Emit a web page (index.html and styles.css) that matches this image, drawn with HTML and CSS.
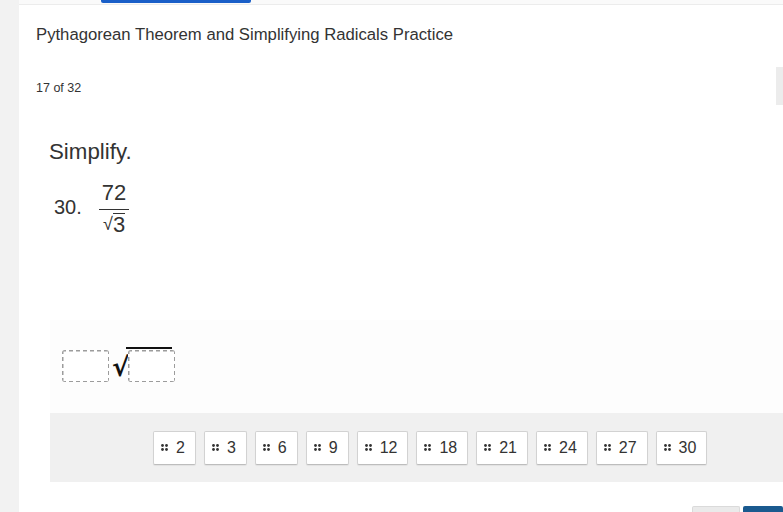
FILE: index.html
```html
<!DOCTYPE html>
<html>
<head>
<meta charset="utf-8">
<link rel="stylesheet" href="styles.css">
</head>
<body>
<div class="app">
  <div class="sidebar"></div>
  <div class="main">
    <div class="topbar"><div class="tab-indicator"></div></div>
    <div class="header">
      <h1 class="title">Pythagorean Theorem and Simplifying Radicals Practice</h1>
      <div class="counter">17 of 32</div>
    </div>
    <div class="question">
      <div class="prompt">Simplify.</div>
      <div class="problem">
        <span class="num">30.</span>
        <span class="frac">
          <span class="numer">72</span>
          <span class="denom"><span class="rad">√</span><span class="radicand">3</span></span>
        </span>
      </div>
    </div>
    <div class="answer">
      <div class="drop-row">
        <div class="drop"></div>
        <span class="root-sign">√</span>
        <div class="drop under"></div>
      </div>
    </div>
    <div class="tray">
      <div class="chip"><svg class="grip" viewBox="0 0 7 7"><circle cx="1.5" cy="1.5" r="1.4"/><circle cx="5.5" cy="1.5" r="1.4"/><circle cx="1.5" cy="5.5" r="1.4"/><circle cx="5.5" cy="5.5" r="1.4"/></svg>2</div>
      <div class="chip"><svg class="grip" viewBox="0 0 7 7"><circle cx="1.5" cy="1.5" r="1.4"/><circle cx="5.5" cy="1.5" r="1.4"/><circle cx="1.5" cy="5.5" r="1.4"/><circle cx="5.5" cy="5.5" r="1.4"/></svg>3</div>
      <div class="chip"><svg class="grip" viewBox="0 0 7 7"><circle cx="1.5" cy="1.5" r="1.4"/><circle cx="5.5" cy="1.5" r="1.4"/><circle cx="1.5" cy="5.5" r="1.4"/><circle cx="5.5" cy="5.5" r="1.4"/></svg>6</div>
      <div class="chip"><svg class="grip" viewBox="0 0 7 7"><circle cx="1.5" cy="1.5" r="1.4"/><circle cx="5.5" cy="1.5" r="1.4"/><circle cx="1.5" cy="5.5" r="1.4"/><circle cx="5.5" cy="5.5" r="1.4"/></svg>9</div>
      <div class="chip"><svg class="grip" viewBox="0 0 7 7"><circle cx="1.5" cy="1.5" r="1.4"/><circle cx="5.5" cy="1.5" r="1.4"/><circle cx="1.5" cy="5.5" r="1.4"/><circle cx="5.5" cy="5.5" r="1.4"/></svg>12</div>
      <div class="chip"><svg class="grip" viewBox="0 0 7 7"><circle cx="1.5" cy="1.5" r="1.4"/><circle cx="5.5" cy="1.5" r="1.4"/><circle cx="1.5" cy="5.5" r="1.4"/><circle cx="5.5" cy="5.5" r="1.4"/></svg>18</div>
      <div class="chip"><svg class="grip" viewBox="0 0 7 7"><circle cx="1.5" cy="1.5" r="1.4"/><circle cx="5.5" cy="1.5" r="1.4"/><circle cx="1.5" cy="5.5" r="1.4"/><circle cx="5.5" cy="5.5" r="1.4"/></svg>21</div>
      <div class="chip"><svg class="grip" viewBox="0 0 7 7"><circle cx="1.5" cy="1.5" r="1.4"/><circle cx="5.5" cy="1.5" r="1.4"/><circle cx="1.5" cy="5.5" r="1.4"/><circle cx="5.5" cy="5.5" r="1.4"/></svg>24</div>
      <div class="chip"><svg class="grip" viewBox="0 0 7 7"><circle cx="1.5" cy="1.5" r="1.4"/><circle cx="5.5" cy="1.5" r="1.4"/><circle cx="1.5" cy="5.5" r="1.4"/><circle cx="5.5" cy="5.5" r="1.4"/></svg>27</div>
      <div class="chip"><svg class="grip" viewBox="0 0 7 7"><circle cx="1.5" cy="1.5" r="1.4"/><circle cx="5.5" cy="1.5" r="1.4"/><circle cx="1.5" cy="5.5" r="1.4"/><circle cx="5.5" cy="5.5" r="1.4"/></svg>30</div>
    </div>
    <div class="footer">
      <div class="btn btn-secondary"></div>
      <div class="btn btn-primary"></div>
    </div>
    <div class="side-tab"></div>
  </div>
</div>
</body>
</html>
```

FILE: styles.css
```css
html, body {
  margin: 0;
  padding: 0;
  background: #ffffff;
}
body {
  width: 783px;
  height: 512px;
  overflow: hidden;
  font-family: "Liberation Sans", Arial, sans-serif;
  color: #333333;
}
.app {
  display: flex;
  height: 512px;
}
.sidebar {
  width: 19px;
  flex: none;
  background: #f2f2f2;
}
.main {
  flex: 1;
  position: relative;
  display: flex;
  flex-direction: column;
  min-width: 0;
}
.topbar {
  height: 4px;
  background: #fafafa;
  border-bottom: 1px solid #ececec;
}
.tab-indicator {
  margin-left: 82px;
  width: 150px;
  height: 3px;
  background: #1a5fc8;
  border-radius: 0 0 2px 2px;
}
.header {
  padding-left: 17px;
}
.title {
  margin: 20px 0 0 0;
  font-size: 16.7px;
  font-weight: normal;
  line-height: 20px;
  color: #333;
}
.counter {
  margin-top: 35px;
  font-size: 12.5px;
  line-height: 16px;
  color: #333;
}
.question {
  padding-left: 30px;
  margin-top: 43px;
}
.prompt {
  font-size: 22.3px;
  line-height: 26px;
  color: #333;
}
.problem {
  display: flex;
  align-items: center;
  margin-top: 14px;
  margin-left: 5px;
}
.num {
  font-size: 20px;
  line-height: 24px;
}
.frac {
  display: inline-flex;
  flex-direction: column;
  align-items: center;
  margin-left: 17px;
}
.numer {
  font-size: 22px;
  line-height: 24px;
  padding: 2px 3px 4px;
  border-bottom: 1.5px solid #333;
}
.denom {
  display: flex;
  align-items: flex-end;
  font-size: 22px;
  line-height: 24px;
  padding-top: 3px;
}
.rad {
  font-size: 18px;
  line-height: 22px;
}
.radicand {
  border-top: 1.5px solid #333;
  line-height: 21px;
}
.answer {
  margin-left: 31px;
  margin-top: 85px;
  height: 93px;
  background: #fdfdfd;
  display: flex;
  align-items: flex-start;
}
.drop-row {
  display: flex;
  align-items: flex-end;
  margin-top: 30px;
  margin-left: 12px;
}
.drop {
  width: 47px;
  height: 32px;
  border-radius: 3px;
  background:
    repeating-linear-gradient(90deg, #9c9c9c 0 4px, transparent 4px 7px) left top / 100% 1.5px no-repeat,
    repeating-linear-gradient(90deg, #9c9c9c 0 4px, transparent 4px 7px) left bottom / 100% 1.5px no-repeat,
    repeating-linear-gradient(180deg, #9c9c9c 0 4px, transparent 4px 7px) left top / 1.5px 100% no-repeat,
    repeating-linear-gradient(180deg, #9c9c9c 0 4px, transparent 4px 7px) right top / 1.5px 100% no-repeat,
    #ffffff;
}
.root-sign {
  font-family: "DejaVu Sans", sans-serif;
  font-size: 26px;
  font-weight: bold;
  line-height: 30px;
  color: #111;
  margin-left: 3px;
  margin-right: -1px;
}
.drop.under {
  position: relative;
}
.drop.under::before {
  content: "";
  position: absolute;
  left: -2px;
  right: 3px;
  top: -3px;
  height: 2px;
  background: #111;
}
.tray {
  margin-left: 31px;
  height: 69px;
  background: #f0f0f0;
  display: flex;
  align-items: center;
  padding-left: 103px;
  gap: 8px;
}
.chip {
  height: 32px;
  padding: 0 10px 0 7px;
  display: flex;
  align-items: center;
  gap: 8px;
  background: #ffffff;
  border: 1px solid #d2d2d2;
  border-bottom-color: #bdbdbd;
  border-radius: 2px;
  font-size: 16px;
  color: #333;
  box-shadow: 0 1px 1px rgba(0,0,0,0.06);
}
.grip {
  width: 7px;
  height: 7px;
  fill: #333;
}
.footer {
  flex: 1;
  display: flex;
  justify-content: flex-end;
  align-items: flex-end;
  gap: 3px;
}
.btn {
  height: 6px;
  border-radius: 2px 2px 0 0;
}
.btn-secondary {
  width: 46px;
  background: #eaeaea;
  border: 1px solid #dadada;
  border-bottom: none;
  height: 5px;
}
.btn-primary {
  width: 40px;
  background: #1a5a8f;
}
.side-tab {
  position: absolute;
  right: 0;
  top: 67px;
  width: 7px;
  height: 38px;
  background: #ececec;
}
```
